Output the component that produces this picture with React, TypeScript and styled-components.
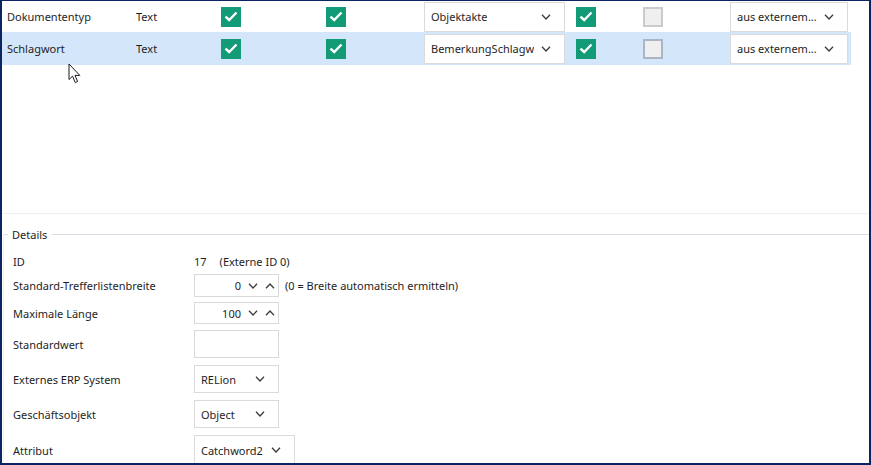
import React from 'react';
import styled, { createGlobalStyle } from 'styled-components';

const GlobalStyle = createGlobalStyle`
  html, body {
    margin: 0;
    padding: 0;
    background: #ffffff;
  }
  * {
    box-sizing: border-box;
  }
`;

const Frame = styled.div`
  position: relative;
  width: 871px;
  height: 465px;
  overflow: hidden;
  border: 2px solid #0c2461;
  border-top-width: 1px;
  background: #ffffff;
  font-family: 'Noto Sans', 'Open Sans', sans-serif;
  font-size: 11px;
  color: #1e1e1e;
  display: flex;
  flex-direction: column;
`;

// Liste der Felder oben
const List = styled.div`
  height: 213px;
  flex-shrink: 0;
  border-bottom: 1px solid #eef0f2;
`;

const Row = styled.div<{ $selected?: boolean }>`
  display: grid;
  grid-template-columns: 129px 85px 105px 100px 150px 67px 87px 126px;
  width: 849px;
  height: ${({ $selected }) => ($selected ? '33px' : '31px')};
  background: ${({ $selected }) => ($selected ? '#d4e6f9' : 'transparent')};
`;

const Cell = styled.div<{ $pad?: number }>`
  display: flex;
  align-items: center;
  height: 100%;
  padding-left: ${({ $pad }) => $pad ?? 5}px;
  white-space: nowrap;
`;

const Check = styled.div<{ $checked?: boolean; $selected?: boolean }>`
  width: 20px;
  height: 20px;
  display: flex;
  align-items: center;
  justify-content: center;
  background: ${({ $checked }) => ($checked ? '#139a77' : '#efefef')};
  border: ${({ $checked, $selected }) =>
    $checked ? 'none' : `2px solid ${$selected ? '#aab6c6' : '#cbcbcb'}`};
`;

const Select = styled.div<{ $w: number; $h: number }>`
  width: ${({ $w }) => $w}px;
  height: ${({ $h }) => $h}px;
  background: #ffffff;
  border: 1px solid #dadada;
  display: flex;
  align-items: center;
  justify-content: space-between;
  padding: 0 13px 0 6px;
  white-space: nowrap;
  overflow: hidden;
`;

const SelectText = styled.span`
  overflow: hidden;
`;

// Details-Bereich
const Group = styled.fieldset`
  margin: 13px -10px 0 1px;
  padding: 5px 0 0 9px;
  border: none;
  border-top: 1px solid #d7dde5;
  border-left: 1px solid #eef1f4;
  border-top-left-radius: 3px;
  min-width: 0;
`;

const Legend = styled.legend`
  padding: 0 5px 0 4px;
  margin-left: -5px;
  color: #1e1e1e;
`;

const Form = styled.div`
  display: flex;
  flex-direction: column;
`;

const FormRow = styled.div<{ $mt: number; $h: number }>`
  display: grid;
  grid-template-columns: 181px auto;
  align-items: center;
  margin-top: ${({ $mt }) => $mt}px;
  height: ${({ $h }) => $h}px;
`;

const Label = styled.span`
  white-space: nowrap;
`;

const Value = styled.div`
  display: flex;
  align-items: center;
  gap: 13px;
  white-space: nowrap;
`;

const Spin = styled.div<{ $h: number }>`
  width: 85px;
  height: ${({ $h }) => $h}px;
  border: 1px solid #d9d9d9;
  display: flex;
  align-items: center;
  justify-content: flex-end;
  gap: 7px;
  padding-right: 3px;
`;

const SpinValue = styled.span`
  margin-right: 0;
`;

const Hint = styled.span`
  margin-left: 6px;
`;

const TextBox = styled.div`
  width: 85px;
  height: 28px;
  border: 1px solid #d9d9d9;
`;

const Controls = styled.div`
  display: flex;
  align-items: center;
`;

const Cursor = styled.svg`
  position: absolute;
  left: 66px;
  top: 62px;
`;

const Chevron = ({ up = false }: { up?: boolean }) => (
  <svg width="10" height="6" viewBox="0 0 10 6">
    <path
      d={up ? 'M1 5.2 L5 1 L9 5.2' : 'M1 0.8 L5 5 L9 0.8'}
      fill="none"
      stroke="#3c3c3c"
      strokeWidth="1.3"
    />
  </svg>
);

const Tick = () => (
  <svg width="14" height="11" viewBox="0 0 14 11">
    <path d="M1.5 5.6 L5.2 9 L12.5 1.5" fill="none" stroke="#ffffff" strokeWidth="2.4" />
  </svg>
);

type Field = { name: string; kind: string; target: string; selected?: boolean };

const fields: Field[] = [
  { name: 'Dokumententyp', kind: 'Text', target: 'Objektakte' },
  { name: 'Schlagwort', kind: 'Text', target: 'BemerkungSchlagw', selected: true },
];

export default function App() {
  return (
    <>
      <GlobalStyle />
      <Frame>
        <List>
          {fields.map((f) => (
            <Row key={f.name} $selected={f.selected}>
              <Cell>{f.name}</Cell>
              <Cell>{f.kind}</Cell>
              <Cell>
                <Check $checked>
                  <Tick />
                </Check>
              </Cell>
              <Cell>
                <Check $checked>
                  <Tick />
                </Check>
              </Cell>
              <Cell $pad={3}>
                <Select $w={141} $h={30}>
                  <SelectText>{f.target}</SelectText>
                  <Chevron />
                </Select>
              </Cell>
              <Cell>
                <Check $checked>
                  <Tick />
                </Check>
              </Cell>
              <Cell>
                <Check $selected={f.selected} />
              </Cell>
              <Cell>
                <Select $w={118} $h={30}>
                  <SelectText>aus externem...</SelectText>
                  <Chevron />
                </Select>
              </Cell>
            </Row>
          ))}
        </List>

        <Group>
          <Legend>Details</Legend>
          <Form>
            <FormRow $mt={3} $h={22}>
              <Label>ID</Label>
              <Value>
                <span>17</span>
                <span>(Externe ID 0)</span>
              </Value>
            </FormRow>
            <FormRow $mt={2} $h={23}>
              <Label>Standard-Trefferlistenbreite</Label>
              <Controls>
                <Spin $h={23}>
                  <SpinValue>0</SpinValue>
                  <Chevron />
                  <Chevron up />
                </Spin>
                <Hint>(0 = Breite automatisch ermitteln)</Hint>
              </Controls>
            </FormRow>
            <FormRow $mt={5} $h={22}>
              <Label>Maximale Länge</Label>
              <Controls>
                <Spin $h={22}>
                  <SpinValue>100</SpinValue>
                  <Chevron />
                  <Chevron up />
                </Spin>
              </Controls>
            </FormRow>
            <FormRow $mt={6} $h={28}>
              <Label>Standardwert</Label>
              <Controls>
                <TextBox />
              </Controls>
            </FormRow>
            <FormRow $mt={7} $h={28}>
              <Label>Externes ERP System</Label>
              <Controls>
                <Select $w={85} $h={28}>
                  <SelectText>RELion</SelectText>
                  <Chevron />
                </Select>
              </Controls>
            </FormRow>
            <FormRow $mt={7} $h={28}>
              <Label>Geschäftsobjekt</Label>
              <Controls>
                <Select $w={85} $h={28}>
                  <SelectText>Object</SelectText>
                  <Chevron />
                </Select>
              </Controls>
            </FormRow>
            <FormRow $mt={7} $h={28}>
              <Label>Attribut</Label>
              <Controls>
                <Select $w={101} $h={30}>
                  <SelectText>Catchword2</SelectText>
                  <Chevron />
                </Select>
              </Controls>
            </FormRow>
          </Form>
        </Group>

        <Cursor width="14" height="22" viewBox="0 0 14 22">
          <path
            d="M1 1 L1 16.5 L4.6 13.2 L7.2 19.5 L9.6 18.5 L7 12.4 L11.8 12.4 Z"
            fill="#ffffff"
            stroke="#1a1a1a"
            strokeWidth="1"
            strokeLinejoin="round"
          />
        </Cursor>
      </Frame>
    </>
  );
}
